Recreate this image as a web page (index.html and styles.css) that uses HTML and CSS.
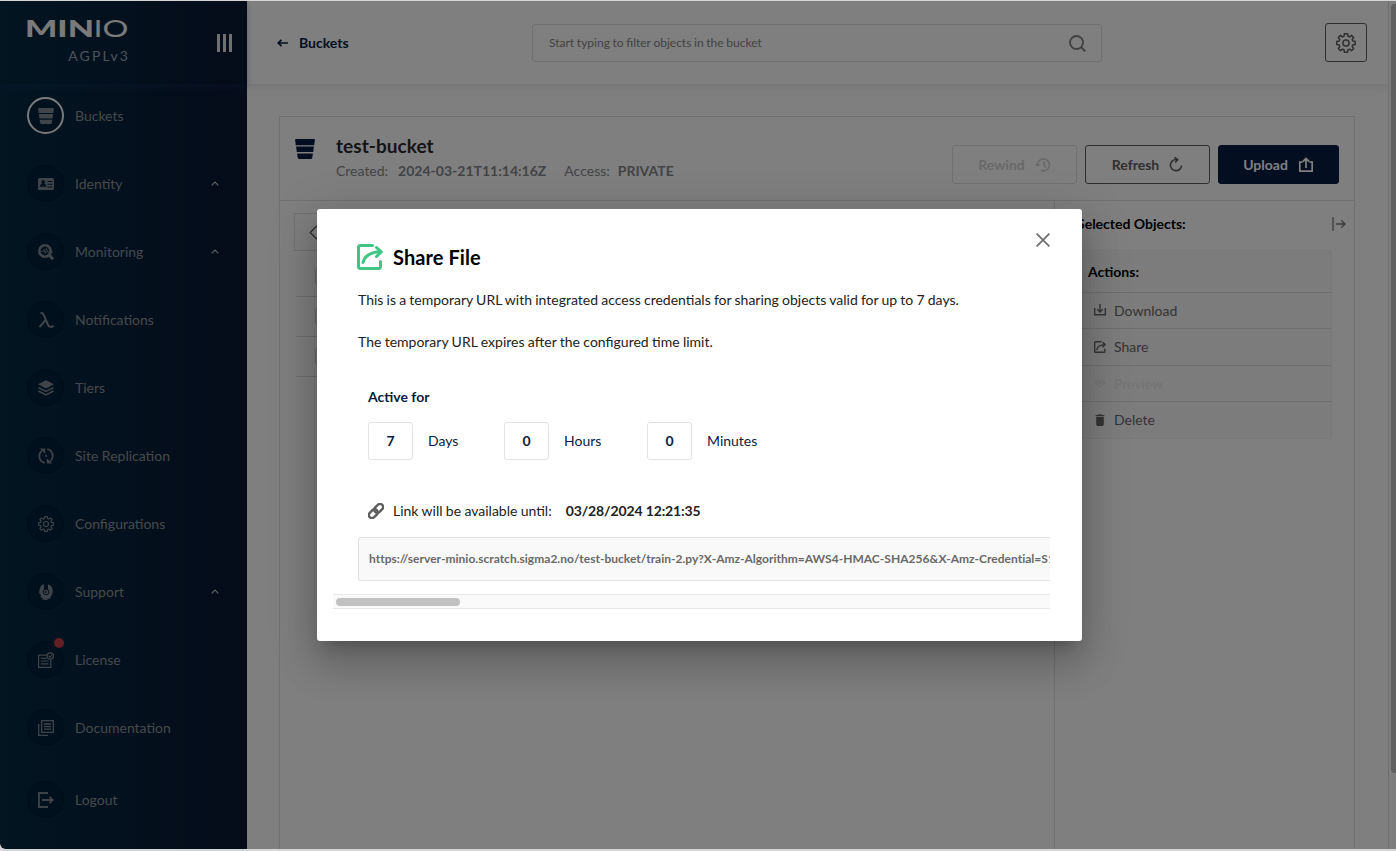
FILE: index.html
```html
<!DOCTYPE html>
<html lang="en">
<head>
<meta charset="utf-8">
<title>MinIO Console</title>
<link rel="stylesheet" href="styles.css">
</head>
<body>
<svg class="defs" width="0" height="0">
  <symbol id="bucket" viewBox="0 0 20 20"><path d="M.9 0H19.100q1 0 .8 1L19.200 6.200H.8L.1 1Q0 0 .9 0ZM1.100 7.600H18.900L18.200 13.100H1.800ZM2.100 14.600H17.900L17.300 18.700Q17 20 15.700 20H4.300Q3 20 2.700 18.700Z"/></symbol>
  <symbol id="share" viewBox="0 0 26 26"><g fill="none" stroke="currentColor" stroke-width="3" stroke-linecap="round" stroke-linejoin="round"><path d="M15.500 1.500H3.500Q1.500 1.500 1.500 3.500V22.500Q1.500 24.500 3.500 24.500H21.500Q23.500 24.500 23.500 22.500V17.500"/><path d="M6 18.500Q8.500 8.500 23 7.800M19.500 3.500L24.300 7.800L19.500 12.500"/></g></symbol>
  <symbol id="gear" viewBox="0 0 20 20"><g fill="none" stroke="currentColor" stroke-width="1.500" stroke-linejoin="round"><path d="M8.400.8H11.600L12 3.200L13.600 3.900L15.500 2.400L17.700 4.600L16.200 6.500L16.800 8.100L19.200 8.400V11.600L16.800 12L16.200 13.600L17.700 15.500L15.500 17.700L13.600 16.200L12 16.800L11.600 19.200H8.400L8 16.800L6.400 16.200L4.500 17.700L2.300 15.500L3.800 13.600L3.200 12L.8 11.600V8.400L3.200 8.100L3.800 6.500L2.300 4.600L4.500 2.400L6.400 3.900L8 3.200Z"/><circle cx="10" cy="10" r="3.100"/></g></symbol>
  <symbol id="up" viewBox="0 0 8 5"><path d="M.7 4.300L4 1L7.300 4.300" fill="none" stroke="currentColor" stroke-width="1.100"/></symbol>
</svg>

<div class="screen">
  <div class="app">
    <aside class="sidebar">
      <div class="brand">
        <div class="logo">
          <svg class="wordmark" width="101" height="18" viewBox="0 0 101 18"><text class="wm-bold" x="-2" y="17" textLength="69" lengthAdjust="spacingAndGlyphs">MIN</text><text class="wm-thin" x="66.500" y="17" textLength="35" lengthAdjust="spacingAndGlyphs">IO</text></svg>
          <div class="edition">AGPLv3</div>
        </div>
        <div class="burger"><i></i><i></i><i></i></div>
      </div>
      <nav class="menu">
        <a class="item active"><span class="ico"><svg width="16" height="16"><use href="#bucket"/></svg></span><span class="label">Buckets</span></a>
        <a class="item"><span class="ico"><svg width="16" height="16" viewBox="0 0 16 16"><path fill-rule="evenodd" d="M1.500 2H14.500Q16 2 16 3.500V12.500Q16 14 14.500 14H1.500Q0 14 0 12.500V3.500Q0 2 1.500 2ZM5.200 4A2 2 0 0 0 4 7.500Q2 8.300 1.700 10.800H8.500Q8.300 8.300 6.300 7.500A2 2 0 0 0 5.200 4ZM9.500 5V6H14.500V5ZM9.500 7.700V8.700H14.500V7.700ZM9.500 10.400V11.400H14.500V10.400Z"/></svg></span><span class="label">Identity</span><svg class="chev" width="8" height="5"><use href="#up"/></svg></a>
        <a class="item"><span class="ico"><svg width="16" height="16" viewBox="0 0 16 16"><circle cx="7" cy="7" r="5.700" fill="none" stroke="currentColor" stroke-width="2.600"/><path d="M10.500 10.500L15.200 15.200" stroke="currentColor" stroke-width="3"/><path d="M3.300 7.500H5L6 5.500L7.300 9.500L8.500 4.500L9.300 8H15" fill="none" stroke="currentColor" stroke-width=".9"/></svg></span><span class="label">Monitoring</span><svg class="chev" width="8" height="5"><use href="#up"/></svg></a>
        <a class="item"><span class="ico"><svg width="16" height="16" viewBox="0 0 16 16"><path d="M2.500 1H3.500Q5 1 5.700 2.800L9.800 12.500Q10.900 15 12.500 15Q14.300 15 15.500 13.800M8 7.500L1.500 15.200" fill="none" stroke="currentColor" stroke-width="2"/></svg></span><span class="label">Notifications</span></a>
        <a class="item"><span class="ico"><svg width="16" height="16" viewBox="0 0 16 16"><path d="M8 .2L16 4.300L8 8.500L0 4.300Z"/><path d="M.5 7.600L8 11.400L15.500 7.600M.5 11L8 14.900L15.500 11" fill="none" stroke="currentColor" stroke-width="1.600"/></svg></span><span class="label">Tiers</span></a>
        <a class="item"><span class="ico"><svg width="16" height="16" viewBox="0 0 16 16"><g fill="none" stroke="currentColor" stroke-width="1.800"><path d="M6.700 14.900A7 7 0 0 1 4 2.600M9.300 1.100A7 7 0 0 1 12 13.400"/></g><path d="M1.800.4H7.200V5.800ZM14.200 15.600H8.800V10.200Z"/><circle cx="8" cy="8" r="1.100"/></svg></span><span class="label">Site Replication</span></a>
        <a class="item"><span class="ico"><svg width="16" height="16"><use href="#gear"/></svg></span><span class="label">Configurations</span></a>
        <a class="item"><span class="ico"><svg width="16" height="16" viewBox="0 0 16 16"><path fill-rule="evenodd" d="M6 .2V5.300A3.300 3.300 0 0 0 6 10.600Q8 12 10 10.600A3.300 3.300 0 0 0 10 5.300V.2Q14.700 1.800 14.700 7Q14.700 10.500 12.700 12.500L12 14.800L9.500 14.500V16L4.500 15.500V13.500H2.800V10.500L1.300 9.800Q.8 1.500 6 .2Z"/><path fill-rule="evenodd" d="M8 5.700A2.300 2.300 0 1 1 8 10.300A2.300 2.300 0 0 1 8 5.700ZM8 7.100A.9.9 0 1 0 8 8.900A.9.9 0 0 0 8 7.100Z"/></svg></span><span class="label">Support</span><svg class="chev" width="8" height="5"><use href="#up"/></svg></a>
        <a class="item"><span class="ico"><svg width="16" height="16" viewBox="0 0 16 16"><g fill="none" stroke="currentColor" stroke-width="1.200"><path d="M9 3.200H.6V15.400H12.800V8M2.800 6.300H8.500M2.800 9H10.500M2.800 11.800H10.500"/><circle cx="12.300" cy="4" r="3.200"/><path d="M10.800 4L12 5.200L14 2.800"/></g></svg><b class="dot"></b></span><span class="label">License</span></a>
        <a class="item"><span class="ico"><svg width="16" height="16" viewBox="0 0 16 16"><g fill="none" stroke="currentColor" stroke-width="1.300"><path d="M3.600.7H15.300V12.400H3.600ZM.7 4V15.300H10M6 4H13M6 6.600H13M6 9.200H13"/></g></svg></span><span class="label">Documentation</span></a>
        <a class="item logout"><span class="ico"><svg width="16" height="16" viewBox="0 0 16 16"><path d="M10 1H1V15H10M4 8H14M11.500 5L14.700 8L11.500 11" fill="none" stroke="currentColor" stroke-width="1.800"/></svg></span><span class="label">Logout</span></a>
      </nav>
    </aside>

    <main class="main">
      <header class="topbar">
        <a class="back"><svg width="11" height="8" viewBox="0 0 11 8"><path d="M11 4H2M4.500 .8L1.200 4L4.500 7.200" fill="none" stroke="currentColor" stroke-width="1.700"/></svg><span>Buckets</span></a>
        <div class="search"><span>Start typing to filter objects in the bucket</span><svg width="17" height="17" viewBox="0 0 17 17"><circle cx="7.500" cy="7.500" r="6.500" fill="none" stroke="currentColor" stroke-width="1.900"/><path d="M12 12L16.200 16.200" stroke="currentColor" stroke-width="2.100"/></svg></div>
        <button class="settings"><svg width="20" height="20"><use href="#gear"/></svg></button>
      </header>
      <section class="panel">
        <div class="panel-head">
          <svg class="bucket-ico" width="20" height="20"><use href="#bucket"/></svg>
          <div class="title">
            <h1>test-bucket</h1>
            <p><span>Created:</span><b class="created">2024-03-21T11:14:16Z</b><span class="access">Access:</span><b class="private">PRIVATE</b></p>
          </div>
          <div class="buttons">
            <button class="btn disabled"><span>Rewind</span><svg width="16" height="16" viewBox="0 0 16 16"><path d="M2.500 8A6 6 0 1 1 6 13.300M9 4.500V8L11 10.500" fill="none" stroke="currentColor" stroke-width="1.600"/><path d="M0 7.200H5.300L2.600 10Z"/></svg></button>
            <button class="btn"><span>Refresh</span><svg width="14" height="15" viewBox="0 0 14 15"><path d="M7.500 2.500A5.600 5.600 0 1 0 12.600 8.500M5.500 .3L8.700 2.600L6.200 5.600" fill="none" stroke="currentColor" stroke-width="1.600"/></svg></button>
            <button class="btn primary"><span>Upload</span><svg width="16" height="16" viewBox="0 0 16 16"><path d="M4.500 5.200H1.800V14.200H14.200V5.200H11.500M8 11V2M4.800 4.600L8 1.500L11.200 4.600" fill="none" stroke="currentColor" stroke-width="1.700"/></svg></button>
          </div>
        </div>
        <div class="panel-body">
          <div class="browser">
            <div class="path"><svg width="9" height="15" viewBox="0 0 9 15"><path d="M8 .7L1.200 7.500L8 14.300" fill="none" stroke="currentColor" stroke-width="1.300"/></svg></div>
            <div class="rows">
              <div class="row"><i></i></div>
              <div class="row"><i></i></div>
              <div class="row"><i></i></div>
            </div>
          </div>
          <div class="details">
            <div class="details-head"><b>Selected Objects:</b><svg width="14" height="14" viewBox="0 0 14 14"><path d="M1 0V14M4 7H13M9.300 3.200L13 7L9.300 10.800" fill="none" stroke="currentColor" stroke-width="1.300"/></svg></div>
            <div class="actions">
              <div class="actions-title">Actions:</div>
              <div class="action"><svg width="12" height="12" viewBox="0 0 12 12"><path d="M.7 4V10.800H11.300V4M6 0V7.500M3.300 5.300L6 8L8.700 5.300" fill="none" stroke="currentColor" stroke-width="1.400"/></svg><span>Download</span></div>
              <div class="action"><svg width="12" height="12"><use href="#share"/></svg><span>Share</span></div>
              <div class="action off"><svg width="12" height="12" viewBox="0 0 12 12"><path fill-rule="evenodd" d="M.5 6Q6-.8 11.500 6Q6 12.800.5 6ZM6 3.500A2.500 2.500 0 1 0 6 8.500A2.500 2.500 0 0 0 6 3.500ZM6 4.800A1.200 1.200 0 1 1 6 7.200A1.200 1.200 0 0 1 6 4.800Z"/></svg><span>Preview</span></div>
              <div class="action"><svg width="12" height="12" viewBox="0 0 12 12"><path d="M1.700 1H4L4.600.2H7.400L8 1H10.300V2.300H1.700ZM2.200 3.100H9.800V10.600Q9.800 12 8.500 12H3.500Q2.200 12 2.200 10.600Z"/></svg><span>Delete</span></div>
            </div>
          </div>
        </div>
      </section>
    </main>
    <div class="scrollbar"><i></i></div>
  </div>

  <div class="overlay">
    <div class="modal">
      <div class="modal-head">
        <svg class="share-ico" width="26" height="26"><use href="#share"/></svg>
        <h2>Share File</h2>
        <svg class="close" width="14" height="14" viewBox="0 0 14 14"><path d="M.6 .6L13.400 13.400M13.400 .6L.6 13.400" stroke="currentColor" stroke-width="1.800"/></svg>
      </div>
      <div class="content">
        <p class="info">This is a temporary URL with integrated access credentials for sharing objects valid for up to 7 days.</p>
        <p class="info second">The temporary URL expires after the configured time limit.</p>
        <div class="active-for">Active for</div>
        <div class="times">
          <span class="num">7</span><span class="unit days">Days</span>
          <span class="num">0</span><span class="unit hours">Hours</span>
          <span class="num">0</span><span class="unit minutes">Minutes</span>
        </div>
        <div class="until"><svg width="16" height="16" viewBox="0 0 16 16"><g fill="none" stroke="currentColor" stroke-width="2.400" transform="rotate(-45 8 8)"><rect x="-.8" y="4.900" width="10" height="6.200" rx="3.100"/><rect x="6.800" y="4.900" width="10" height="6.200" rx="3.100"/></g></svg><span>Link will be available until:</span><b>03/28/2024 12:21:35</b></div>
        <div class="url"><span>https://server-minio.scratch.sigma2.no/test-bucket/train-2.py?X-Amz-Algorithm=AWS4-HMAC-SHA256&amp;X-Amz-Credential=S1</span></div>
        <div class="hscroll"><i></i></div>
      </div>
    </div>
  </div>
</div>
</body>
</html>
```
FILE: styles.css
```css
* { box-sizing: border-box; }
body { margin: 0; font-family: Lato, "Liberation Sans", sans-serif; font-size: 14px; }
h1, h2, p { margin: 0; }
svg { display: block; flex: none; fill: currentColor; }
.defs { position: absolute; }
button { font: inherit; background: none; }

.screen { position: relative; width: 1396px; height: 851px; overflow: hidden; background: #d5d5d5; padding: 1px 0 2px; }
.app { display: flex; height: 848px; background: #fff; border-bottom-left-radius: 6px; overflow: hidden; }

.sidebar { width: 247px; flex: none; color: #88939b; background: linear-gradient(90deg, #052a42, #0a1733); }
.brand { height: 83px; display: flex; justify-content: space-between; padding: 19px 15px 0 27px; box-shadow: 0 3px 7px rgba(30, 65, 115, .28); }
.logo { width: 101px; }
.wordmark { overflow: visible; fill: #f4f4f4; }
.wm-bold { font-size: 23px; font-weight: 900; }
.wm-thin { font-size: 23px; font-weight: 400; }
.edition { margin-top: 9px; text-align: right; line-height: 18px; font-size: 14px; letter-spacing: 2.1px; color: #98a5b5; margin-right: -2px; }
.burger { display: flex; gap: 3px; height: 18px; margin-top: 14px; }
.burger i { width: 3px; background: #e0e0e0; }
.menu { padding-top: 13px; }
.item { display: flex; align-items: center; height: 37px; margin-bottom: 31px; padding: 0 28px 0 27px; }
.ico { position: relative; width: 37px; height: 37px; border-radius: 50%; background: #01203a; border: 1px solid #031a30; display: flex; align-items: center; justify-content: center; }
.ico svg { color: #7c8993; }
.active .ico { border: 2px solid #f2f2f2; }
.label { margin-left: 11px; flex: 1; }
.chev { color: #c0c4ca; }
.dot { position: absolute; top: -4px; right: -1px; width: 10px; height: 10px; border-radius: 50%; background: #c83b4b; }
.logout { margin-top: 35px; }

.main { flex: 1; display: flex; flex-direction: column; }
.topbar { height: 83px; flex: none; display: flex; align-items: center; padding: 0 21px 0 29px; box-shadow: 0 3px 8px rgba(0, 0, 0, .09); }
.back { display: flex; align-items: center; gap: 11px; width: 256px; padding-left: 1px; font-weight: 700; color: #081c42; }
.search { width: 570px; height: 38px; border: 1px solid #e2e2e2; border-radius: 3px; display: flex; align-items: center; justify-content: space-between; padding: 0 15px 0 16px; font-size: 12px; color: #858585; word-spacing: -.4px; }
.search svg { margin-top: 1px; }
.settings { width: 42px; height: 39px; margin-left: auto; border: 1px solid #5e5e5e; border-radius: 3px; padding: 0; display: flex; align-items: center; justify-content: center; color: #5e5e5e; }
.panel { flex: 1; margin: 32px 33px 0 32px; border: 1px solid #e2e2e2; border-bottom: 0; display: flex; flex-direction: column; }
.panel-head { height: 84px; flex: none; display: flex; padding: 0 15px; border-bottom: 1px solid #e2e2e2; }
.bucket-ico { color: #081c42; margin-top: 22px; }
.title { margin-left: 21px; padding-top: 16px; }
.title h1 { font-size: 19px; line-height: 26px; font-weight: 700; color: #2a2a2a; letter-spacing: .05px; }
.title p { display: flex; line-height: 24px; color: #87888d; }
.created { margin-left: 10px; }
.access { margin-left: 18px; }
.private { margin-left: 8px; }
.buttons { margin-left: auto; display: flex; gap: 8px; padding-top: 28px; }
.btn { width: 125px; height: 39px; border: 1px solid #5e5e5e; border-radius: 3px; display: flex; align-items: center; justify-content: center; gap: 10px; padding: 0; font-weight: 700; color: #5e5e5e; }
.btn.disabled { border-color: #e2e2e2; color: #d3d3d3; }
.btn.primary { width: 121px; background: #081c42; border-color: #081c42; color: #fff; }
.panel-body { flex: 1; display: flex; }
.browser { flex: 1; padding: 12px 14px; }
.path { height: 38px; border: 1px solid #e2e2e2; display: flex; align-items: center; padding-left: 14px; color: #5e5e5e; }
.rows { margin: 6px 0 0 2px; }
.row { height: 40px; border-bottom: 1px solid #dcdcdc; padding: 11px 0 0 19px; }
.row i { display: block; width: 17px; height: 17px; border: 1px solid #c4c4c4; border-radius: 3px; }
.details { width: 300px; border-left: 1px solid #e2e2e2; padding: 0 22px; }
.details-head { display: flex; align-items: center; justify-content: space-between; height: 49px; margin-right: -14px; color: #000; padding-bottom: 3px; }
.details-head b { margin-top: -2px; }
.details-head svg { color: #777; }
.actions { border: 1px solid #f1f1f1; border-radius: 3px; background: #f8f8f8; color: #696969; }
.actions-title { height: 40.600px; line-height: 41px; padding-left: 10px; font-weight: 700; color: #000; }
.action { display: flex; align-items: center; gap: 8px; height: 36.500px; border-top: 1px solid #dedede; padding-left: 16px; }
.off { color: #e8e8e8; }
.scrollbar { width: 8px; border-left: 1px solid #dedede; background: #fafafa; padding: 3px 0 0 2px; }
.scrollbar i { display: block; height: 769px; border-radius: 4px 0 0 4px; background: #c1c1c1; }

.overlay { position: absolute; left: 0; right: 0; top: 1px; bottom: 2px; background: rgba(0, 0, 0, .5); display: flex; justify-content: center; align-items: flex-start; border-bottom-left-radius: 6px; padding: 208px 0 0 3px; }
.modal { width: 765px; height: 432px; border-radius: 3px; background: #fff; box-shadow: 0 11px 15px -7px rgba(0,0,0,.2), 0 24px 38px 3px rgba(0,0,0,.14), 0 9px 46px 8px rgba(0,0,0,.12); }
.modal-head { display: flex; align-items: center; height: 26px; margin: 35px 32px 0 40px; }
.share-ico { color: #41c584; }
.modal h2 { margin-left: 10px; font-size: 20px; line-height: 26px; color: #000; letter-spacing: .08px; }
.close { margin-left: auto; margin-bottom: 35px; color: #707070; }
.content { padding: 20px 32px 0 16px; color: #222; }
.info { margin-left: 25px; line-height: 20px; word-spacing: -.4px; }
.second { margin-top: 22px; word-spacing: -.25px; }
.active-for { margin: 35px 0 0 35px; line-height: 20px; font-weight: 700; color: #081c42; }
.times { display: flex; align-items: center; margin: 15px 0 0 35px; color: #081c42; }
.num { width: 45px; height: 38px; border: 1px solid #e2e2e2; border-radius: 3px; display: flex; align-items: center; justify-content: center; font-weight: 700; padding-bottom: 2px; }
.unit { margin-left: 15px; padding-bottom: 2px; }
.days { width: 76px; }
.hours { width: 83px; }
.until { display: flex; align-items: center; margin: 41px 0 0 35px; line-height: 20px; }
.until svg { color: #5e5e5e; margin-right: 9px; }
.until span { word-spacing: -.25px; }
.until b { margin-left: 14px; letter-spacing: -.13px; }
.url { height: 44px; margin: 16px 0 0 25px; border: 1px solid #e2e2e2; border-right: 0; border-radius: 3px 0 0 3px; background: #f9f9f9; overflow: hidden; display: flex; align-items: center; padding: 0 0 2px 10px; font-size: 12px; font-weight: 700; color: #696969; white-space: nowrap; letter-spacing: .012px; }
.hscroll { height: 15px; margin-top: 13px; border-top: 1px solid #e8e8e8; border-bottom: 1px solid #e8e8e8; background: #fafafa; padding: 3px; }
.hscroll i { display: block; width: 124px; height: 8px; border-radius: 4px; background: #c1c1c1; }
```
